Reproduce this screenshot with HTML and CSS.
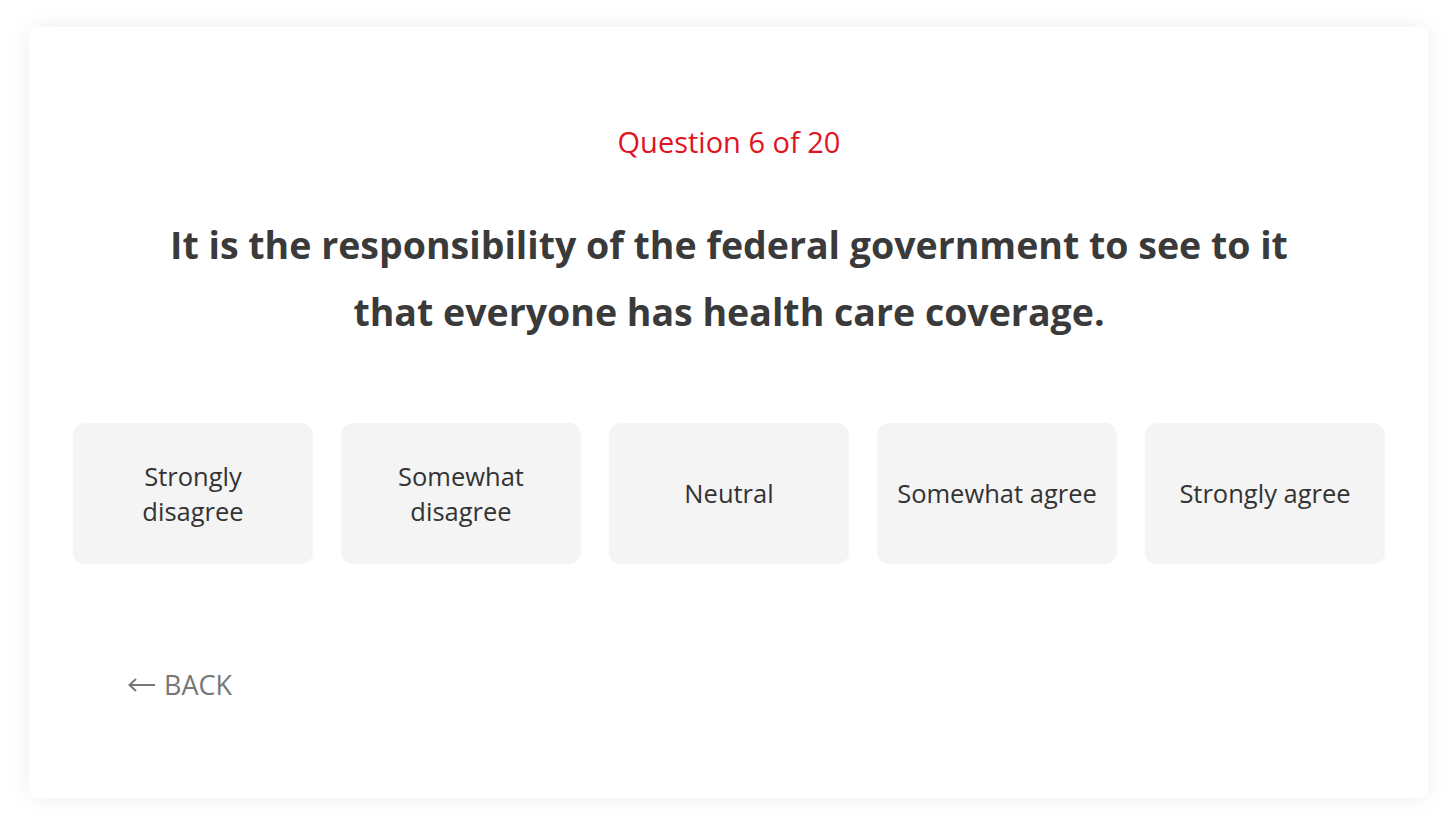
FILE: index.html
```html
<!DOCTYPE html>
<html lang="en">
<head>
  <meta charset="UTF-8" />
  <meta name="viewport" content="width=device-width, initial-scale=1.0"/>
  <title>Quiz</title>
  <link rel="stylesheet" href="styles.css">
</head>
<body>

  <div class="card">
    <p class="counter">Question 6 of 20</p>
    <h1 class="question">It is the responsibility of the federal government to see to it that everyone has health care coverage.</h1>

    <div class="answers">
      <button class="answer">Strongly<br>disagree</button>
      <button class="answer">Somewhat<br>disagree</button>
      <button class="answer">Neutral</button>
      <button class="answer">Somewhat agree</button>
      <button class="answer">Strongly agree</button>
    </div>

    <a class="back" href="#">
      <svg class="back-arrow" width="28" height="14" viewBox="0 0 28 14"><path d="M27 7H2M8 1L1.5 7L8 13" fill="none" stroke="currentColor" stroke-width="2"/></svg>
      BACK
    </a>
  </div>

</body>
</html>
```

FILE: styles.css
```css
body {
  margin: 0;
  background-color: #fff;
  font-family: "Open Sans", Roboto, sans-serif;
  color: #333;
  padding: 27px 28px 28px 29px;
}

.card {
  background-color: #fff;
  border-radius: 8px;
  box-shadow: 0 0 24px rgba(0, 0, 0, 0.07);
  height: 771px;
  box-sizing: border-box;
  padding: 96px 43px 0 44px;
  text-align: center;
}

.counter {
  margin: 0;
  color: #e0141e;
  font-size: 29px;
  line-height: 38px;
}

.question {
  margin: 50px auto 0;
  max-width: 1160px;
  font-size: 37.5px;
  font-weight: 700;
  line-height: 67px;
  color: #3a3a3a;
}

.answers {
  display: flex;
  gap: 28px;
  margin-top: 78px;
}

.answer {
  flex: 1;
  height: 141px;
  background-color: #f4f4f4;
  border: none;
  border-radius: 12px;
  font-family: inherit;
  font-size: 25.5px;
  line-height: 35px;
  color: #333;
  cursor: pointer;
}

.back {
  display: flex;
  align-items: center;
  gap: 8px;
  width: max-content;
  margin: 102px 0 0 55px;
  font-size: 27px;
  color: #777;
  text-decoration: none;
}
```
